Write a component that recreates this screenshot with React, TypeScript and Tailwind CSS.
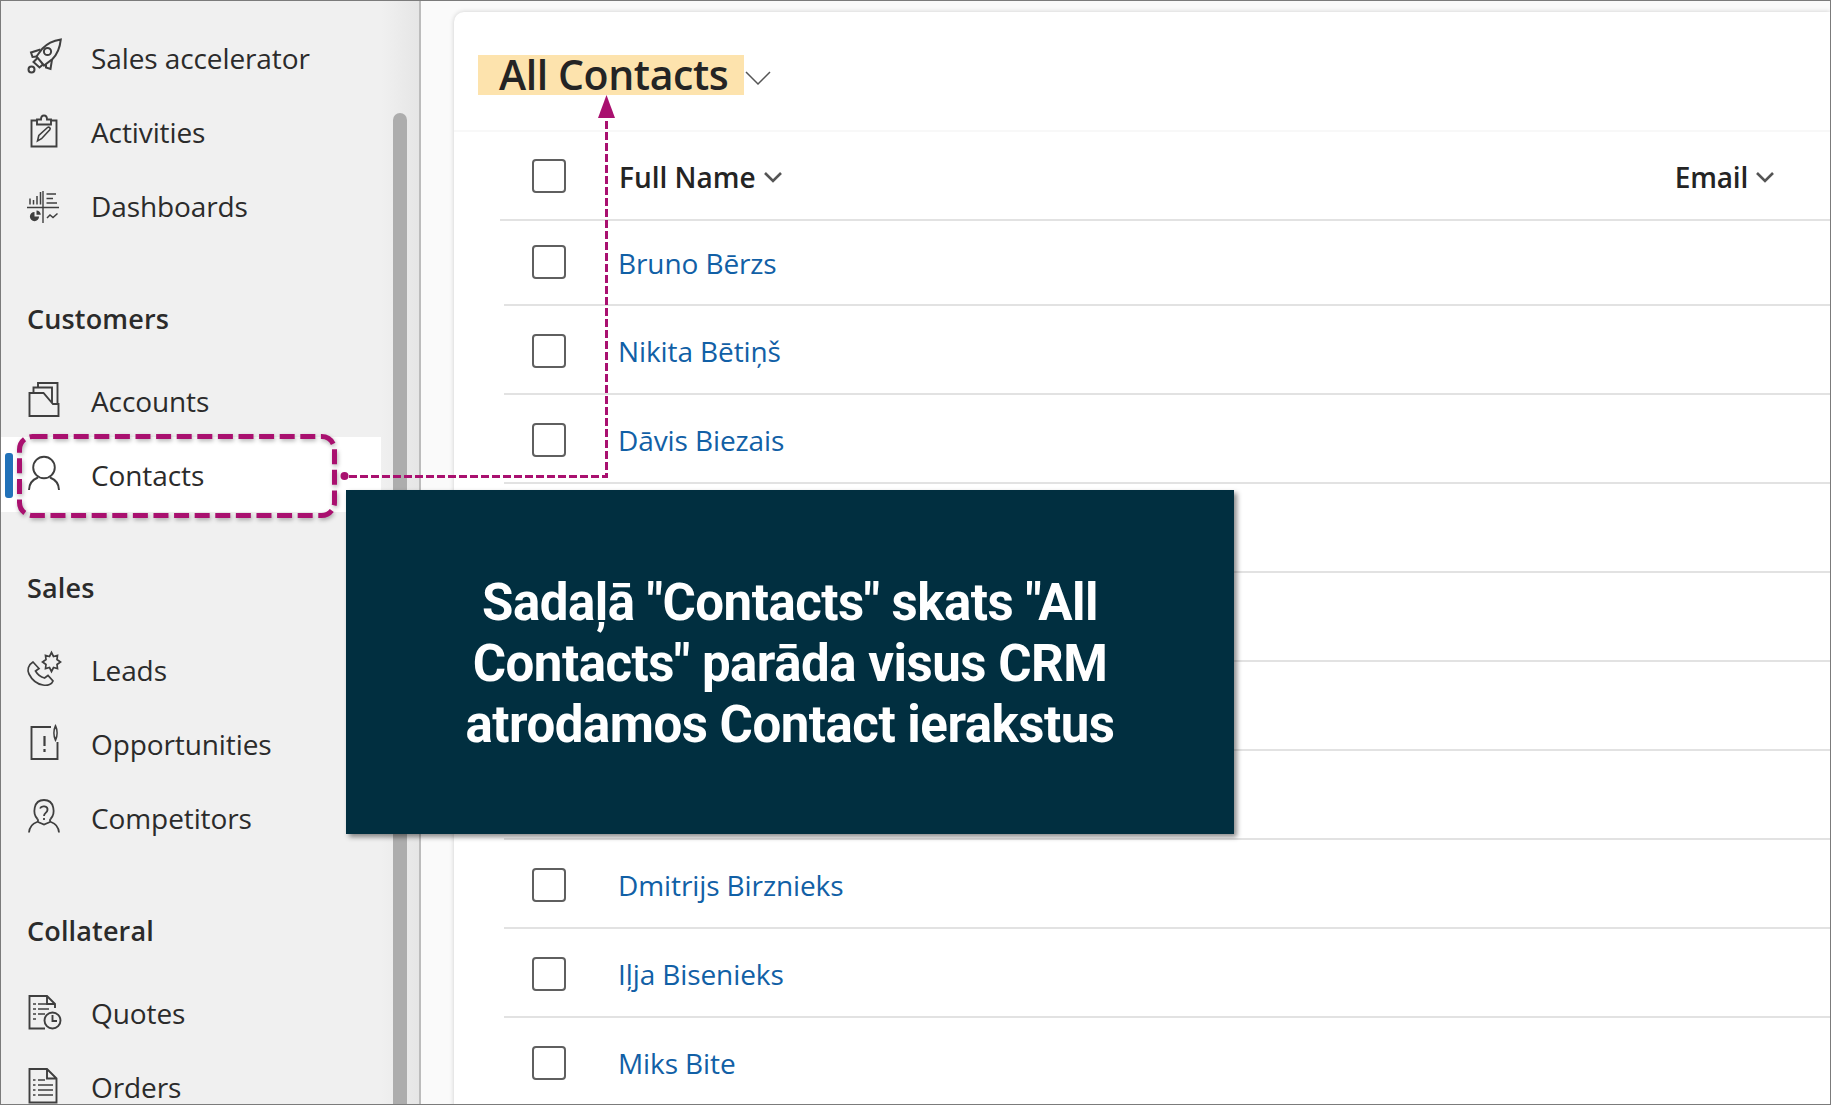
import React from "react";

const S = { fill: "none", stroke: "#3f3f3f", strokeWidth: 1.6 } as const;

const Ico = ({ children }: { children: React.ReactNode }) => (
  <svg width="44" height="44" viewBox="0 0 44 44" className="shrink-0" {...S}>
    {children}
  </svg>
);

const Rocket = () => (
  <Ico>
    <path strokeWidth="2" d="M38.8 3.4C31 4.6 25 7.5 20.5 12.5L14.5 20.5L22 29.5L30.5 23C35.5 18 38 11 38.8 3.4Z" />
    <circle strokeWidth="2" cx="25.5" cy="15.5" r="3.6" />
    <path strokeWidth="2" d="M18.5 13.5L9 16.5L10.5 21L15 20.5M30 23.5L28.5 33L24 31.5L24 28.5M15.5 22L11.5 26L17.5 31.5L21.5 28" />
    <circle strokeWidth="2" cx="9.5" cy="33.5" r="3" />
  </Ico>
);
const Clipboard = () => (
  <Ico>
    <path strokeWidth="1.9" d="M15 10.5H9.5V36.5H34.5V10.5H29M15 14.5H29V9.5H25C25 6.5 24 5.5 22 5.5C20 5.5 19 6.5 19 9.5H15Z" />
    <path strokeWidth="1.6" d="M15.5 31L16.8 25.5L25.5 17.5C27 16.3 29 18.2 27.8 19.8L19.5 28.7Z" />
  </Ico>
);
const Dash = () => (
  <Ico>
    <path strokeWidth="1.4" d="M5 23.5H37M21 7V39" />
    <path strokeWidth="1.5" d="M8 14.5V20.5M11.5 16V20.5M15 12V20.5M18.5 8V20.5M24.5 10H34M24.5 14.5H31M24.5 19H35" />
    <path fill="#3f3f3f" stroke="none" d="M12.5 28a4.6 4.6 0 1 0 4.6 4.6H12.5ZM14.5 26.5v4.3h4.3a4.3 4.3 0 0 0-4.3-4.3Z" />
    <path strokeWidth="1.5" d="M25 34L28 31L31 33.5L35.5 29.5" />
  </Ico>
);
const Folder = () => (
  <Ico>
    <path strokeWidth="1.9" d="M7.5 37V14H21.5L31 25H36.5V37ZM11.5 14V8.5H30V24.5M16 8.5V4H35.5V25" />
  </Ico>
);
const Person = () => (
  <Ico>
    <circle strokeWidth="1.9" cx="22" cy="14.5" r="10.8" />
    <path strokeWidth="1.9" d="M7 37C7 31 11 26.5 16 24.5M28 24.5C33 26.5 37 31 37 37" />
  </Ico>
);
const Phone = () => (
  <Ico>
    <path strokeWidth="1.7" d="M11 14C6 17 5 22 7 26C10 32 15 36 21 37C26 38 30 36 31 33L26 27.5L22.5 30C18.5 29 15.5 26.5 13.5 23L17 20.5Z" />
    <path strokeWidth="1.7" d="M29.5 4.5L31.5 8.5L35.5 7.5L35 11.5L38.5 14L35 16.5L35.5 20.5L31.5 19.5L29.5 23.5L27.5 19.5L23.5 20.5L24 16.5L20.5 14L24 11.5L23.5 7.5L27.5 8.5Z" />
  </Ico>
);
const Opp = () => (
  <Ico>
    <path strokeWidth="1.9" d="M29 5H9.5V37H35.5V20" />
    <path strokeWidth="1.7" d="M33.5 18C31.5 14 31.5 8 33.5 4C35.5 8 35.5 14 33.5 18Z" />
    <path strokeWidth="2.2" d="M22.5 14V24M22.5 27V30" />
  </Ico>
);
const Comp = () => (
  <Ico>
    <path strokeWidth="1.8" d="M15.5 23C10.5 18 11 4 22 4C33 4 33.5 18 28.5 23" />
    <path strokeWidth="1.8" d="M18 12.5C19.5 9 26 10 25.5 14C25 17 22 17 22 20M22 22V24" />
    <path strokeWidth="1.8" d="M15.5 23C16.5 24.5 16 25.5 15 26C10.5 27.5 7.5 31.5 7 36.5M28.5 23C27.5 24.5 28 25.5 29 26C33.5 27.5 36.5 31.5 37 36.5M16 26L22 28.5L28 26" />
  </Ico>
);
const Quote = () => (
  <Ico>
    <path strokeWidth="1.9" d="M23 37.5H7.5V5H25L33 13V17M25 5V13H33" />
    <path strokeWidth="1.6" d="M11 13H14M16 13H24M11 18H14M16 18H27M11 23H14M16 23H23M11 28H14" />
    <circle strokeWidth="1.9" cx="30.5" cy="29.5" r="8" />
    <path strokeWidth="1.9" d="M30.5 24V30H35" />
  </Ico>
);
const Order = () => (
  <Ico>
    <path strokeWidth="1.9" d="M7.5 37.5V4H25L34.5 13.5V37.5ZM25 4V13.5H34.5" />
    <path strokeWidth="1.7" d="M11 15H13.5M16 15H23M11 20H13.5M16 20H31M11 25H13.5M16 25H31M11 30H13.5M16 30H31" />
  </Ico>
);

const NavItem = ({ icon, label, active }: { icon: React.ReactNode; label: string; active?: boolean }) => (
  <div className={`relative flex items-center pl-[21px] ${active ? "-mt-px h-[75px] bg-white" : "h-[74px]"}`}>
    {active && <div className="absolute left-[4px] top-[16px] h-[45px] w-[8px] rounded-[3px] bg-[#2272b9]" />}
    {icon}
    <span className="ml-[25px] text-[28px] leading-none text-[#2b2b2b] font-[Open_Sans,sans-serif] tracking-[-0.1px]">{label}</span>
  </div>
);

const Group = ({ label, mt, mb }: { label: string; mt: string; mb: string }) => (
  <div className={`pl-[26px] text-[27px] leading-[36px] font-semibold text-[#2b2b2b] font-[Open_Sans,sans-serif] tracking-[0.15px] ${mt} ${mb}`}>{label}</div>
);

const Check = () => <div className="h-[34px] w-[34px] rounded-[4px] border-2 border-[#5f5f5f] bg-white" />;

const Chev = () => (
  <svg width="20" height="13" viewBox="0 0 20 13" fill="none" stroke="#555" strokeWidth="2.6">
    <path d="M2 2L10 10L18 2" />
  </svg>
);

const Row = ({ name, first }: { name?: string; first?: boolean }) => (
  <div className={`flex items-center border-b-2 border-[#e2e2e2] pl-[28px] ${first ? "h-[85px] pb-[2px]" : "h-[89px] pt-[2px]"}`}>
    {name !== undefined && (
      <>
        <Check />
        <span className={`ml-[52px] text-[28px] leading-none text-[#1160a6] font-[Open_Sans,sans-serif] tracking-[-0.1px] ${first ? "mt-[2px]" : ""}`}>{name}</span>
      </>
    )}
  </div>
);

export default function App() {
  return (
    <div className="relative flex h-[1105px] w-[1831px] overflow-hidden border border-[#7b7b7b] bg-[#fafafa]">
      <aside className="flex h-full w-[420px] shrink-0 border-r-2 border-[#bcbcbc] bg-[#f0f0f0]">
        <nav className="w-[380px] shrink-0 pt-[20px]">
          <NavItem icon={<Rocket />} label="Sales accelerator" />
          <NavItem icon={<Clipboard />} label="Activities" />
          <NavItem icon={<Dash />} label="Dashboards" />
          <Group label="Customers" mt="mt-[58px]" mb="mb-[27px]" />
          <NavItem icon={<Folder />} label="Accounts" />
          <NavItem icon={<Person />} label="Contacts" active />
          <Group label="Sales" mt="mt-[58px]" mb="mb-[27px]" />
          <NavItem icon={<Phone />} label="Leads" />
          <NavItem icon={<Opp />} label="Opportunities" />
          <NavItem icon={<Comp />} label="Competitors" />
          <Group label="Collateral" mt="mt-[58px]" mb="mb-[27px]" />
          <NavItem icon={<Quote />} label="Quotes" />
          <NavItem icon={<Order />} label="Orders" />
        </nav>
        <div className="flex flex-1 bg-gradient-to-r from-[#f0f0f0] to-[#e6e6e6] pl-[12px]">
          <div className="flex w-[14px] shrink-0 flex-col pt-[112px]">
            <div className="flex-1 rounded-t-[7px] bg-[#adadad]" />
          </div>
        </div>
      </aside>

      <main className="min-w-0 flex-1 pl-[33px] pt-[11px]">
        <div className="h-[1200px] rounded-tl-[10px] bg-white shadow-[0_0_5px_rgba(0,0,0,0.18)]">
          <header className="flex h-[120px] items-start border-b-2 border-[#f8f8f8] pl-[24px] pt-[43px]">
            <div className="flex h-[40px] w-[266px] items-center bg-[#fde3ad] pl-[21px]">
              <span className="-mt-[1px] text-[41px] leading-none font-semibold whitespace-nowrap text-[#242424] font-[Open_Sans,sans-serif] tracking-[-0.4px]">All Contacts</span>
            </div>
            <svg className="ml-[1px] mt-[15px]" width="26" height="16" viewBox="0 0 26 16" fill="none" stroke="#555" strokeWidth="1.5">
              <path d="M1 2L13 14L25 2" />
            </svg>
          </header>
          <div className="ml-[46px]">
            <div className="flex h-[89px] items-center border-b-2 border-[#e2e2e2] pl-[32px] pr-[55px]">
              <Check />
              <div className="ml-[53px] mt-[3px] flex flex-1 items-center gap-[7px]">
                <span className="text-[28px] leading-none font-semibold text-[#242424] font-[Open_Sans,sans-serif] tracking-[0px]">Full Name</span>
                <Chev />
              </div>
              <div className="mt-[3px] flex items-center gap-[7px]">
                <span className="text-[28px] leading-none font-semibold text-[#242424] font-[Open_Sans,sans-serif] tracking-[-0.2px]">Email</span>
                <Chev />
              </div>
            </div>
            <div className="ml-[4px]">
              <Row name="Bruno Bērzs" first />
              <Row name="Nikita Bētiņš" />
              <Row name="Dāvis Biezais" />
              <Row />
              <Row />
              <Row />
              <Row />
              <Row name="Dmitrijs Birznieks" />
              <Row name="Iļja Bisenieks" />
              <Row name="Miks Bite" />
            </div>
          </div>
        </div>
      </main>

      <svg className="pointer-events-none absolute left-[-1px] top-[-1px]" width="1831" height="1105" fill="none">
        <rect x="19.5" y="436.5" width="315" height="79" rx="13" stroke="#a9106f" strokeWidth="5" strokeDasharray="15 5.6" style={{ filter: "drop-shadow(1px 2px 2px rgba(0,0,0,0.3))" }} />
        <circle cx="344.5" cy="476" r="4" fill="#a9106f" />
        <path d="M349 476.5H606.5V118" stroke="#a9106f" strokeWidth="3" strokeDasharray="8 3" />
        <path d="M606.5 95L615 118H598Z" fill="#a9106f" />
      </svg>

      <div className="absolute left-[345px] top-[489px] flex h-[344px] w-[888px] items-center justify-center bg-[#012f40] shadow-[3px_3px_5px_rgba(0,0,0,0.45)]">
        <p className="mt-[2px] w-[700px] text-center text-[51px] leading-[61px] font-bold text-white font-[Roboto,sans-serif] tracking-[-0.5px]">
          Sadaļā "Contacts" skats "All Contacts" parāda visus CRM atrodamos Contact ierakstus
        </p>
      </div>
    </div>
  );
}
